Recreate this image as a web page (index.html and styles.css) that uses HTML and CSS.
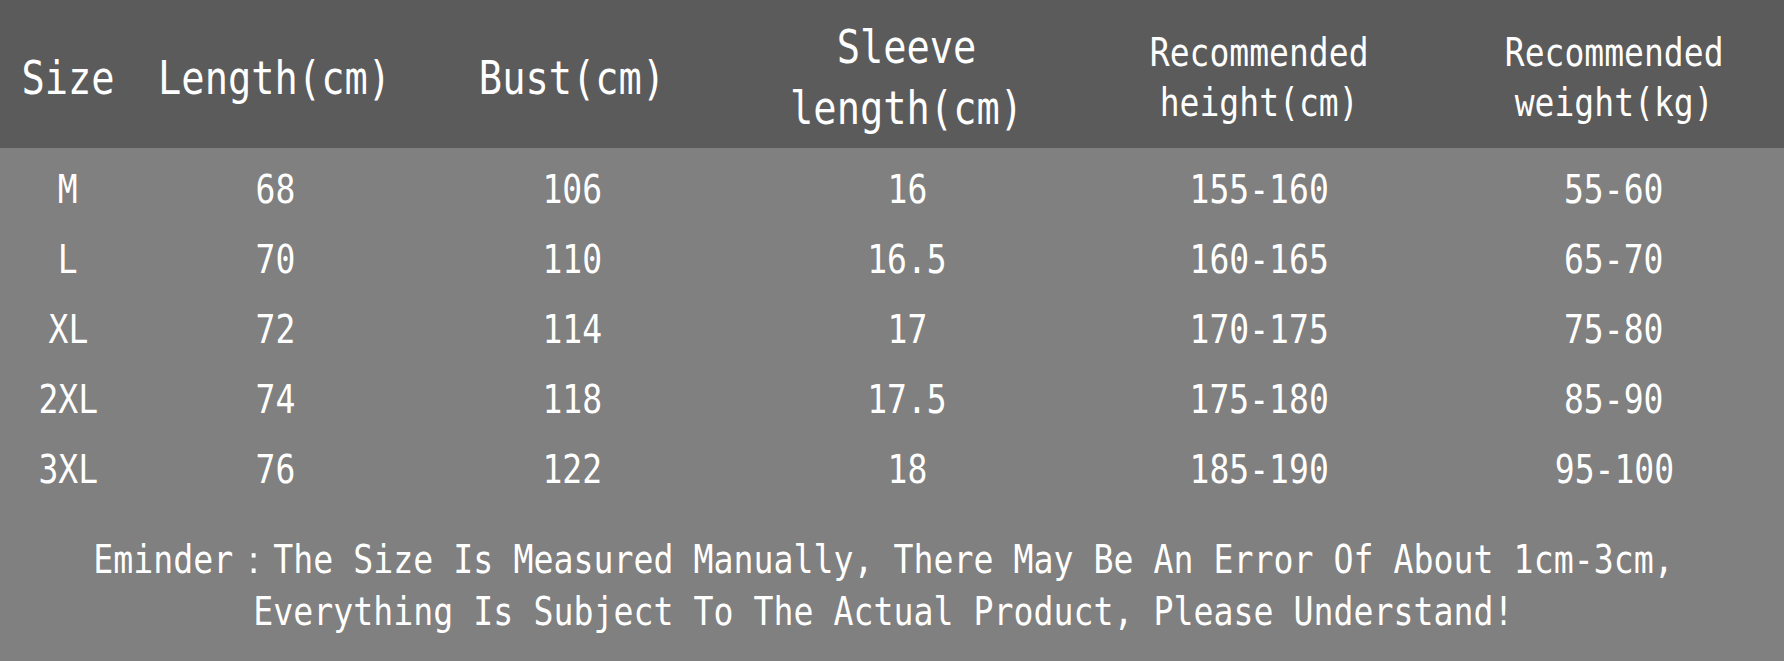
FILE: index.html
```html
<!DOCTYPE html>
<html>
<head>
<meta charset="utf-8">
<title>Size chart</title>
<link rel="stylesheet" href="styles.css">
</head>
<body>
<div class="chart">
  <div class="row head">
    <div class="cell"><span class="t big">Size</span></div>
    <div class="cell"><span class="t big">Length(cm)</span></div>
    <div class="cell"><span class="t big">Bust(cm)</span></div>
    <div class="cell"><span class="t big">Sleeve<br>length(cm)</span></div>
    <div class="cell"><span class="t mid">Recommended<br>height(cm)</span></div>
    <div class="cell"><span class="t mid">Recommended<br>weight(kg)</span></div>
  </div>
  <div class="rows">
    <div class="row data">
      <div class="cell"><span class="t">M</span></div>
      <div class="cell"><span class="t">68</span></div>
      <div class="cell"><span class="t">106</span></div>
      <div class="cell"><span class="t">16</span></div>
      <div class="cell"><span class="t">155-160</span></div>
      <div class="cell"><span class="t">55-60</span></div>
    </div>
    <div class="row data">
      <div class="cell"><span class="t">L</span></div>
      <div class="cell"><span class="t">70</span></div>
      <div class="cell"><span class="t">110</span></div>
      <div class="cell"><span class="t">16.5</span></div>
      <div class="cell"><span class="t">160-165</span></div>
      <div class="cell"><span class="t">65-70</span></div>
    </div>
    <div class="row data">
      <div class="cell"><span class="t">XL</span></div>
      <div class="cell"><span class="t">72</span></div>
      <div class="cell"><span class="t">114</span></div>
      <div class="cell"><span class="t">17</span></div>
      <div class="cell"><span class="t">170-175</span></div>
      <div class="cell"><span class="t">75-80</span></div>
    </div>
    <div class="row data">
      <div class="cell"><span class="t">2XL</span></div>
      <div class="cell"><span class="t">74</span></div>
      <div class="cell"><span class="t">118</span></div>
      <div class="cell"><span class="t">17.5</span></div>
      <div class="cell"><span class="t">175-180</span></div>
      <div class="cell"><span class="t">85-90</span></div>
    </div>
    <div class="row data">
      <div class="cell"><span class="t">3XL</span></div>
      <div class="cell"><span class="t">76</span></div>
      <div class="cell"><span class="t">122</span></div>
      <div class="cell"><span class="t">18</span></div>
      <div class="cell"><span class="t">185-190</span></div>
      <div class="cell"><span class="t">95-100</span></div>
    </div>
  </div>
  <div class="note"><span class="t note-text">Eminder<span class="fw">：</span>The Size Is Measured Manually, There May Be An Error Of About 1cm-3cm,<br>Everything Is Subject To The Actual Product, Please Understand!</span></div>
</div>
</body>
</html>
```

FILE: styles.css
```css
html, body {
  margin: 0;
  overflow: hidden;
}

body {
  background: #808080;
  width: 1784px;
  height: 661px;
  font-family: "DejaVu Sans Mono", "Liberation Mono", monospace;
  color: #ffffff;
}

.chart {
  width: 1784px;
  overflow: hidden;
}

.row {
  display: grid;
  grid-template-columns: 136px 278px 316px 354px 350px 360px;
  width: 1794px;
}

.head {
  background: #5b5b5b;
  height: 148px;
  box-sizing: border-box;
  padding-top: 8px;
  align-items: center;
}

.cell {
  display: flex;
  justify-content: center;
  align-items: center;
}

.t {
  display: inline-block;
  white-space: nowrap;
  text-align: center;
  transform: scaleX(0.847);
  transform-origin: center;
}

.big {
  font-size: 45.7px;
  line-height: 61px;
}

.mid {
  font-size: 39px;
  line-height: 50px;
}

.rows {
  padding-top: 6px;
}

.data {
  height: 70px;
  align-items: center;
  font-size: 39px;
}

.note {
  margin-top: 30px;
  padding-right: 18px;
  display: flex;
  justify-content: center;
  font-size: 39px;
  line-height: 52px;
}

.note-text {
  transform: scaleX(0.852);
}

.fw {
  display: inline-block;
  width: 2ch;
  text-align: center;
}
```
